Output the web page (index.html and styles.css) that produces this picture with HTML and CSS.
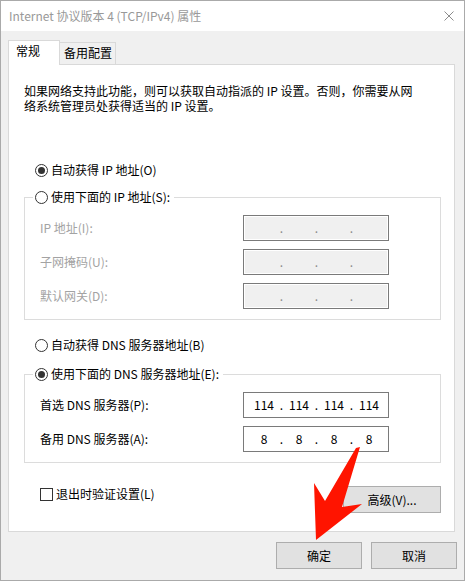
FILE: index.html
```html
<!DOCTYPE html>
<html lang="zh-CN">
<head>
<meta charset="utf-8">
<title>Internet 协议版本 4 (TCP/IPv4) 属性</title>
<link rel="stylesheet" href="styles.css">
</head>
<body>
<div class="window">
  <div class="titlebar">
    <span class="title">Internet 协议版本 4 (TCP/IPv4) 属性</span>
    <svg class="close" viewBox="0 0 10 10" width="10" height="10"><path d="M0.5 0.5 L9.5 9.5 M9.5 0.5 L0.5 9.5" stroke="#8c8c8c" stroke-width="1" fill="none"/></svg>
  </div>
  <div class="content">
    <div class="tabs">
      <div class="tab active">常规</div>
      <div class="tab">备用配置</div>
    </div>
    <div class="panel">
      <p class="intro">如果网络支持此功能，则可以获取自动指派的 IP 设置。否则，你需要从网<br>络系统管理员处获得适当的 IP 设置。</p>

      <div class="radio checked first"><span class="circle"></span><span>自动获得 IP 地址(O)</span></div>

      <fieldset class="group">
        <legend><span class="radio"><span class="circle"></span><span>使用下面的 IP 地址(S):</span></span></legend>
        <div class="rows">
          <span class="lbl disabled">IP 地址(I):</span>
          <div class="ipfield disabled"><span class="seg"></span><span class="dot">.</span><span class="seg"></span><span class="dot">.</span><span class="seg"></span><span class="dot">.</span><span class="seg"></span></div>
          <span class="lbl disabled">子网掩码(U):</span>
          <div class="ipfield disabled"><span class="seg"></span><span class="dot">.</span><span class="seg"></span><span class="dot">.</span><span class="seg"></span><span class="dot">.</span><span class="seg"></span></div>
          <span class="lbl disabled">默认网关(D):</span>
          <div class="ipfield disabled"><span class="seg"></span><span class="dot">.</span><span class="seg"></span><span class="dot">.</span><span class="seg"></span><span class="dot">.</span><span class="seg"></span></div>
        </div>
      </fieldset>

      <div class="radio dns-auto"><span class="circle"></span><span>自动获得 DNS 服务器地址(B)</span></div>

      <fieldset class="group group-dns">
        <legend><span class="radio checked"><span class="circle"></span><span>使用下面的 DNS 服务器地址(E):</span></span></legend>
        <div class="rows">
          <span class="lbl">首选 DNS 服务器(P):</span>
          <div class="ipfield"><span class="seg">114</span><span class="dot">.</span><span class="seg">114</span><span class="dot">.</span><span class="seg">114</span><span class="dot">.</span><span class="seg">114</span></div>
          <span class="lbl">备用 DNS 服务器(A):</span>
          <div class="ipfield"><span class="seg">8</span><span class="dot">.</span><span class="seg">8</span><span class="dot">.</span><span class="seg">8</span><span class="dot">.</span><span class="seg">8</span></div>
        </div>
      </fieldset>

      <div class="bottom-row">
        <div class="check"><span class="box"></span><span>退出时验证设置(L)</span></div>
        <button class="btn adv" type="button">高级(V)...</button>
      </div>
    </div>
    <div class="actions">
      <button class="btn" type="button">确定</button>
      <button class="btn" type="button">取消</button>
    </div>
  </div>
  <svg class="arrow" width="465" height="581" viewBox="0 0 465 581">
    <polygon points="356,448 360,447 342,507 362,504 316,540 314,483 325,501" fill="#ff1400"/>
  </svg>
</div>
</body>
</html>
```
FILE: styles.css
```css
* { box-sizing: border-box; }
html, body { margin: 0; padding: 0; }
body {
  font-family: "Noto Sans CJK SC", "Noto Sans", sans-serif;
  font-size: 12px;
  color: #000;
  background: #fff;
}
.window {
  position: relative;
  width: 465px;
  height: 581px;
  border: 1px solid #aaaaaa;
  background: #f0f0f0;
  overflow: hidden;
}
.titlebar {
  height: 30px;
  background: #fff;
  display: flex;
  align-items: center;
  padding-left: 8px;
}
.title { color: #999; line-height: 16px; }
.close { margin-left: auto; margin-right: 10px; display: block; }

.content { padding: 9px 7px 0 7px; }

.tabs { display: flex; align-items: flex-start; height: 24px; }
.tab {
  line-height: 16px;
  border: 1px solid #d9d9d9;
  border-bottom: none;
}
.tab.active {
  position: relative;
  z-index: 1;
  width: 52px;
  height: 25px;
  background: #fff;
  padding: 2px 0 0 7px;
}
.tab:not(.active) {
  width: 56px;
  height: 22px;
  margin-top: 2px;
  border-left: none;
  background: #f0f0f0;
  padding: 2px 0 0 4px;
}

.panel {
  width: 447px;
  height: 468px;
  background: #fff;
  border: 1px solid #d9d9d9;
  padding: 18px 0 0 15px;
}
.intro { margin: 0; line-height: 15px; }

.radio {
  display: flex;
  align-items: center;
  gap: 3px;
  height: 16px;
  line-height: 16px;
  white-space: nowrap;
}
.radio .circle {
  width: 13px;
  height: 13px;
  border: 1px solid #333;
  border-radius: 50%;
  display: flex;
  align-items: center;
  justify-content: center;
  background: #fff;
  flex: none;
}
.radio.checked .circle::after {
  content: "";
  width: 7px;
  height: 7px;
  border-radius: 50%;
  background: #333;
}
.radio.first { margin: 49px 0 0 11px; }
.radio.dns-auto { margin: 17px 0 0 11px; }

.group {
  width: 417px;
  margin: 11px 0 0 0;
  border: 1px solid #dcdcdc;
  padding: 10px 0 10px 8px;
}
.group-dns { margin-top: 13px; }
.group legend { padding: 0 4px 0 2px; }

.rows {
  display: grid;
  grid-template-columns: 203px 146px;
  row-gap: 8px;
  align-items: center;
  padding-left: 7px;
}
.lbl { line-height: 16px; white-space: nowrap; }
.lbl.disabled { color: #a3a3a3; }

.ipfield {
  height: 26px;
  border: 1px solid #7a7a7a;
  background: #fff;
  display: flex;
  align-items: center;
  padding-left: 7px;
  line-height: 16px;
}
.ipfield.disabled {
  background: #f0f0f0;
  box-shadow: inset 0 0 0 1px #fff;
  color: #8a8a8a;
}
.seg { width: 26px; text-align: center; }
.dot { width: 9px; text-align: center; }

.bottom-row {
  width: 417px;
  margin-top: 23px;
  padding-left: 16px;
  display: flex;
  justify-content: space-between;
  align-items: flex-start;
}
.check {
  display: flex;
  align-items: center;
  gap: 3px;
  height: 16px;
  line-height: 16px;
}
.check .box {
  width: 13px;
  height: 13px;
  border: 1px solid #333;
  background: #fff;
}

.btn {
  font: inherit;
  color: #000;
  height: 27px;
  width: 86px;
  background: #e1e1e1;
  border: 1px solid #adadad;
  padding: 0;
  line-height: 16px;
}
.btn.adv { width: 98px; }

.actions {
  display: flex;
  justify-content: flex-end;
  gap: 9px;
  margin-top: 10px;
}

.arrow {
  position: absolute;
  left: -1px;
  top: -1px;
  pointer-events: none;
}
```
